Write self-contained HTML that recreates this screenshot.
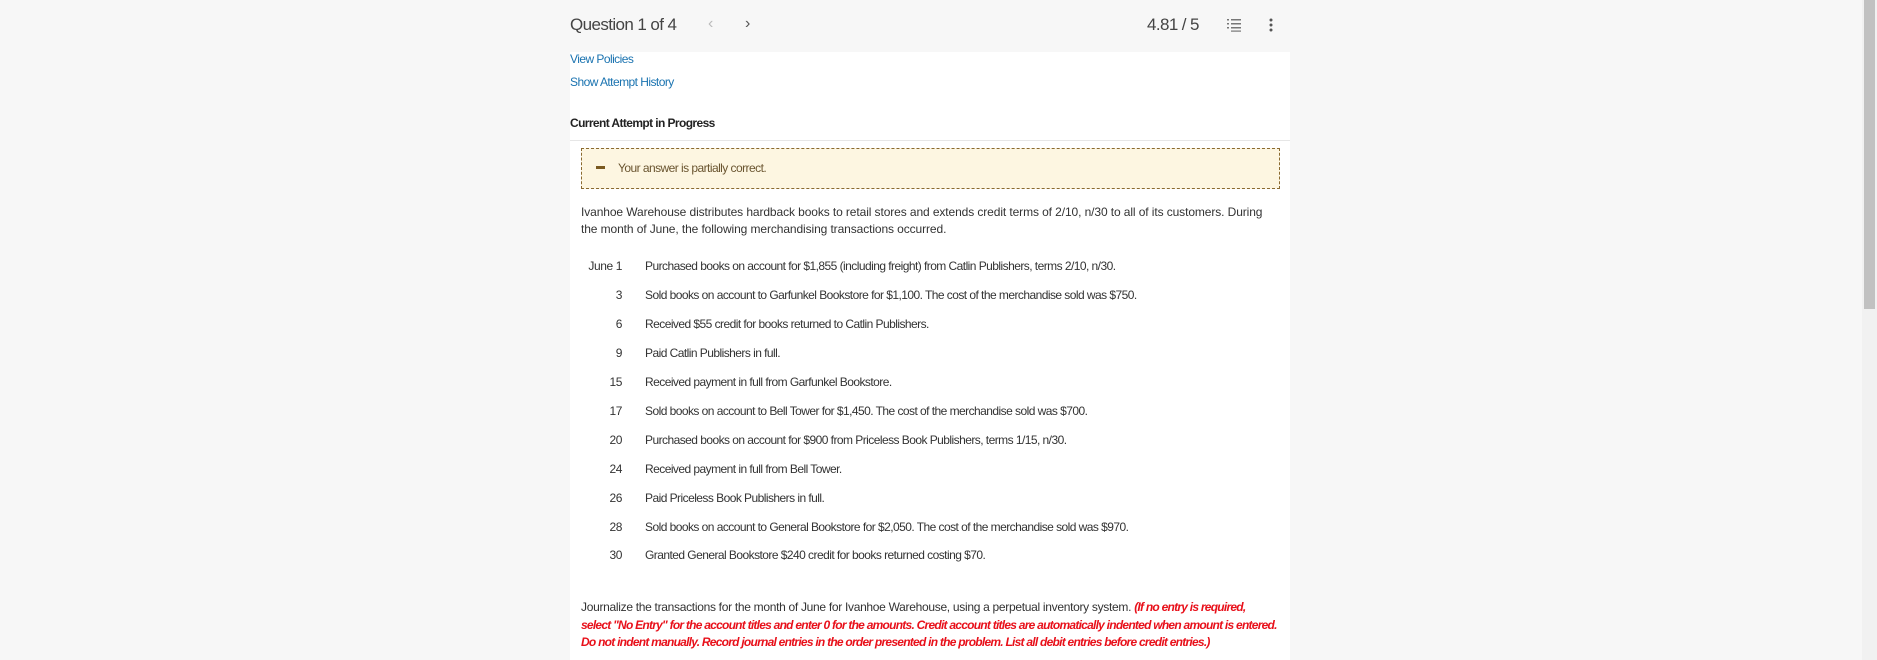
<!DOCTYPE html>
<html><head><meta charset="utf-8"><style>
*{margin:0;padding:0;box-sizing:border-box}
body{width:1877px;height:660px;background:#f7f7f7;font-family:"Liberation Sans",sans-serif;position:relative;overflow:hidden;color:#333}
.hdr{position:absolute;left:0;top:0;width:1862px;height:52px;background:#f7f7f7}
.panel{position:absolute;left:570px;top:52px;width:720px;height:608px;background:#fff}
.t{position:absolute;white-space:nowrap;font-size:12px;letter-spacing:-0.1px}
.r{letter-spacing:-0.55px}
.sb{position:absolute;left:1862px;top:0;width:15px;height:660px;background:#f1f1f1}
.th{position:absolute;left:1864px;top:0;width:11px;height:309px;background:#c1c1c1}
.d{position:absolute;width:40px;text-align:right;left:582px;letter-spacing:-0.4px}
.red{color:#e8101a;font-style:italic;font-weight:bold;letter-spacing:-0.75px}
</style></head><body>
<div class="hdr"></div>
<div class="t" style="left:570px;top:15px;font-size:17px;letter-spacing:-0.6px;color:#444">Question 1 of 4</div>
<div class="t" style="left:708px;top:15px;font-size:16px;color:#bbb">&#8249;</div>
<div class="t" style="left:745px;top:15px;font-size:16px;color:#555">&#8250;</div>
<div class="t" style="left:1147px;top:15px;font-size:17px;letter-spacing:-0.6px;color:#444">4.81 / 5</div>
<svg style="position:absolute;left:1227px;top:18px" width="14" height="14"><g fill="#777"><rect x="0" y="1" width="2" height="1.5"/><rect x="4" y="1" width="10" height="1.5"/><rect x="0" y="5" width="2" height="1.5"/><rect x="4" y="5" width="10" height="1.5"/><rect x="0" y="9" width="2" height="1.5"/><rect x="4" y="9" width="10" height="1.5"/><rect x="4" y="12.5" width="10" height="1.2"/></g></svg>
<svg style="position:absolute;left:1269px;top:17px" width="4" height="16"><g fill="#555"><circle cx="2" cy="3" r="1.5"/><circle cx="2" cy="8" r="1.5"/><circle cx="2" cy="13" r="1.5"/></g></svg>
<div class="panel"></div>
<div class="t r" style="left:570px;top:52px;color:#1a73b0">View Policies</div>
<div class="t r" style="left:570px;top:75px;color:#1a73b0">Show Attempt History</div>
<div class="t" style="left:570px;top:116px;font-weight:bold;color:#222;letter-spacing:-0.6px">Current Attempt in Progress</div>
<div style="position:absolute;left:570px;top:140px;width:720px;height:1px;background:#e6e6e6"></div>
<div style="position:absolute;left:581px;top:148px;width:699px;height:41px;background:#fdf6e1;border:1px dashed #8a6a30"></div>
<div style="position:absolute;left:596px;top:166px;width:9px;height:3px;background:#7a5a20"></div>
<div class="t r" style="left:618px;top:161px;color:#6a5530">Your answer is partially correct.</div>
<div class="t" style="left:581px;top:205px">Ivanhoe Warehouse distributes hardback books to retail stores and extends credit terms of 2/10, n/30 to all of its customers. During</div>
<div class="t" style="left:581px;top:222px">the month of June, the following merchandising transactions occurred.</div>
<div class="t d" style="top:259px">June 1</div><div class="t r" style="left:645px;top:259px">Purchased books on account for $1,855 (including freight) from Catlin Publishers, terms 2/10, n/30.</div>
<div class="t d" style="top:288px">3</div><div class="t r" style="left:645px;top:288px">Sold books on account to Garfunkel Bookstore for $1,100. The cost of the merchandise sold was $750.</div>
<div class="t d" style="top:317px">6</div><div class="t r" style="left:645px;top:317px">Received $55 credit for books returned to Catlin Publishers.</div>
<div class="t d" style="top:346px">9</div><div class="t r" style="left:645px;top:346px">Paid Catlin Publishers in full.</div>
<div class="t d" style="top:375px">15</div><div class="t r" style="left:645px;top:375px">Received payment in full from Garfunkel Bookstore.</div>
<div class="t d" style="top:404px">17</div><div class="t r" style="left:645px;top:404px">Sold books on account to Bell Tower for $1,450. The cost of the merchandise sold was $700.</div>
<div class="t d" style="top:433px">20</div><div class="t r" style="left:645px;top:433px">Purchased books on account for $900 from Priceless Book Publishers, terms 1/15, n/30.</div>
<div class="t d" style="top:462px">24</div><div class="t r" style="left:645px;top:462px">Received payment in full from Bell Tower.</div>
<div class="t d" style="top:491px">26</div><div class="t r" style="left:645px;top:491px">Paid Priceless Book Publishers in full.</div>
<div class="t d" style="top:520px">28</div><div class="t r" style="left:645px;top:520px">Sold books on account to General Bookstore for $2,050. The cost of the merchandise sold was $970.</div>
<div class="t d" style="top:548px">30</div><div class="t r" style="left:645px;top:548px">Granted General Bookstore $240 credit for books returned costing $70.</div>
<div class="t" style="left:581px;top:600px;letter-spacing:-0.3px">Journalize the transactions for the month of June for Ivanhoe Warehouse, using a perpetual inventory system. <span class="red">(If no entry is required,</span></div>
<div class="t red" style="left:581px;top:618px">select "No Entry" for the account titles and enter 0 for the amounts. Credit account titles are automatically indented when amount is entered.</div>
<div class="t red" style="left:581px;top:635px">Do not indent manually. Record journal entries in the order presented in the problem. List all debit entries before credit entries.)</div>
<div class="sb"></div><div class="th"></div>
</body></html>
